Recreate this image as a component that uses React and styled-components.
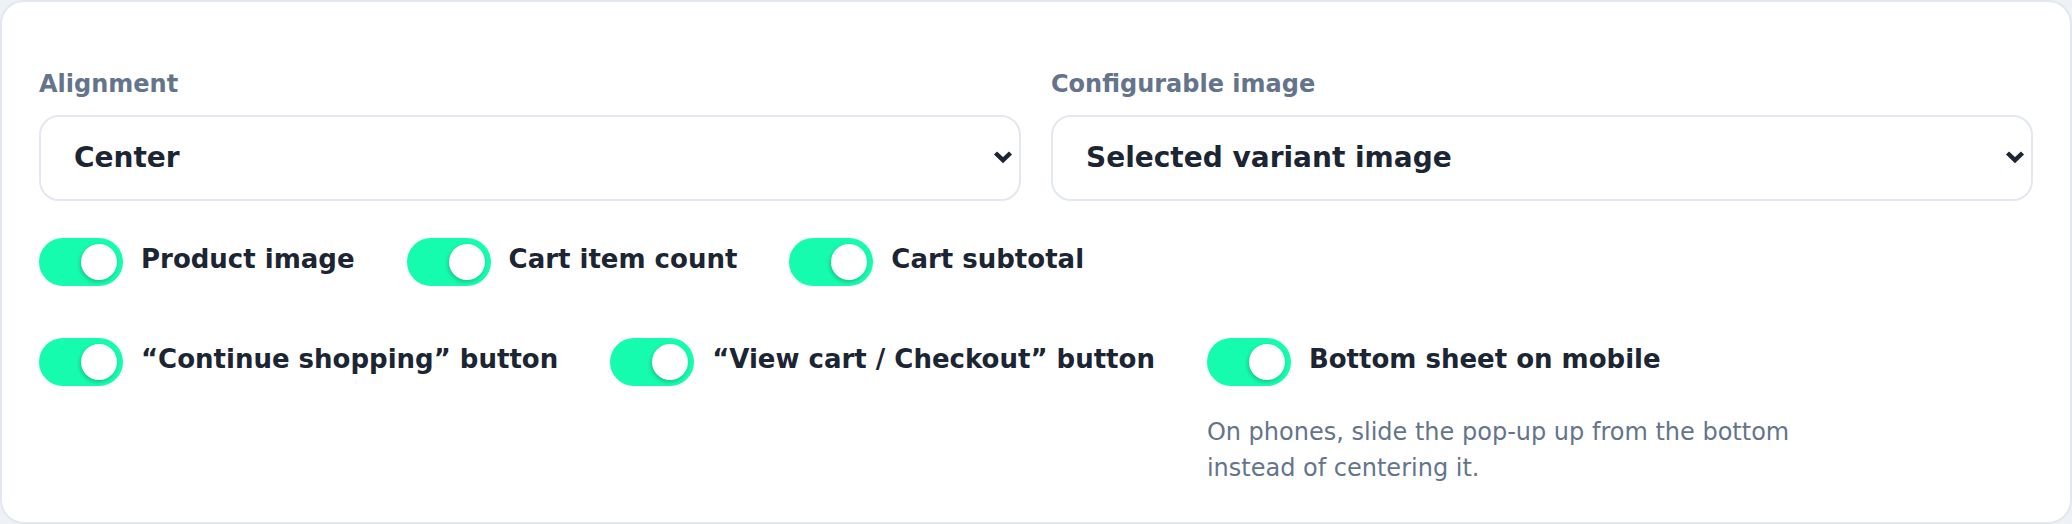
import React from "react";
import styled, { createGlobalStyle } from "styled-components";

const Global = createGlobalStyle`
  html, body { margin: 0; padding: 0; background: #eef1f5; }
  body { font-family: "DejaVu Sans", "Noto Sans", sans-serif; }
  * { box-sizing: border-box; }
`;

const Card = styled.div`
  width: 2072px;
  height: 524px;
  background: #ffffff;
  border: 2px solid #e3e8ef;
  border-radius: 24px;
  padding: 64px 37px 36px 37px;
  display: flex;
  flex-direction: column;
`;

const Fields = styled.div`
  display: grid;
  grid-template-columns: 1fr 1fr;
  column-gap: 30px;
`;

const Field = styled.div`
  display: flex;
  flex-direction: column;
`;

const Label = styled.div`
  font-size: 24px;
  line-height: 36px;
  font-weight: 700;
  color: #64748b;
  margin-bottom: 13px;
`;

const Select = styled.div`
  height: 86px;
  border: 2px solid #e3e8ef;
  border-radius: 20px;
  display: flex;
  align-items: center;
  justify-content: space-between;
  padding: 0 5px 2px 33px;
  font-size: 28px;
  font-weight: 700;
  color: #1b2533;
`;

const Chevron = () => (
  <svg width="22" height="14" viewBox="0 0 22 14" aria-hidden="true">
    <path d="M3.5 3 L11 10.2 L18.5 3" fill="none" stroke="#1b2533" strokeWidth="4.4" strokeLinejoin="miter" strokeLinecap="butt" />
  </svg>
);

const Toggles = styled.div`
  margin-top: 37px;
  display: flex;
  flex-direction: column;
  gap: 52px;
`;

const Row = styled.div`
  display: flex;
  align-items: flex-start;
  gap: 52px;
`;

const ItemCol = styled.div`
  display: flex;
  flex-direction: column;
`;

const Item = styled.div`
  display: flex;
  align-items: center;
  gap: 18px;
`;

const Track = styled.div`
  width: 84px;
  height: 48px;
  border-radius: 24px;
  background: #16fcaf;
  display: flex;
  align-items: center;
  justify-content: ${(p) => (p.$on ? "flex-end" : "flex-start")};
  padding: 0 6px;
  flex-shrink: 0;
`;

const Knob = styled.div`
  width: 36px;
  height: 36px;
  border-radius: 50%;
  background: #ffffff;
  box-shadow: -1px 2px 4px rgba(0, 0, 0, 0.22);
`;

const ToggleLabel = styled.span`
  font-size: 26px;
  line-height: 39px;
  font-weight: 700;
  color: #1b2533;
  padding-bottom: 6px;
  white-space: nowrap;
`;

const Help = styled.p`
  margin: 28px 0 0 0;
  max-width: 640px;
  font-size: 24px;
  line-height: 36px;
  color: #64748b;
`;

const Toggle = ({ label }) => (
  <Item>
    <Track $on>
      <Knob />
    </Track>
    <ToggleLabel>{label}</ToggleLabel>
  </Item>
);

export default function App() {
  return (
    <>
      <Global />
      <Card>
        <Fields>
          <Field>
            <Label>Alignment</Label>
            <Select>
              <span>Center</span>
              <Chevron />
            </Select>
          </Field>
          <Field>
            <Label>Configurable image</Label>
            <Select>
              <span>Selected variant image</span>
              <Chevron />
            </Select>
          </Field>
        </Fields>
        <Toggles>
          <Row>
            <Toggle label="Product image" />
            <Toggle label="Cart item count" />
            <Toggle label="Cart subtotal" />
          </Row>
          <Row>
            <Toggle label="“Continue shopping” button" />
            <Toggle label="“View cart / Checkout” button" />
            <ItemCol>
              <Toggle label="Bottom sheet on mobile" />
              <Help>On phones, slide the pop-up up from the bottom instead of centering it.</Help>
            </ItemCol>
          </Row>
        </Toggles>
      </Card>
    </>
  );
}
